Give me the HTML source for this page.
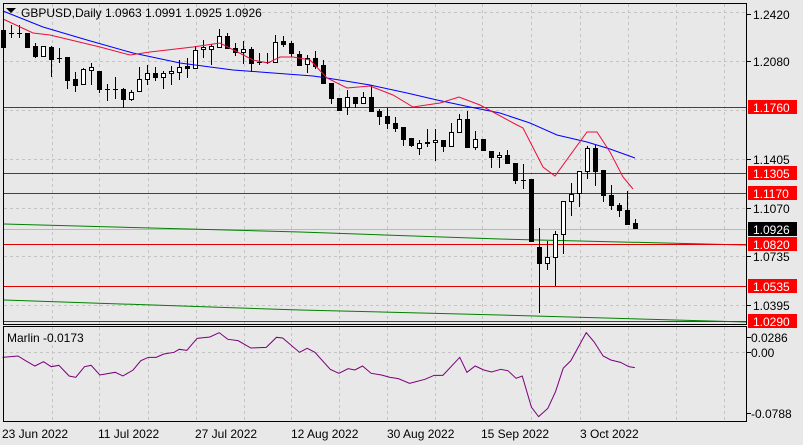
<!DOCTYPE html>
<html><head><meta charset="utf-8"><style>
html,body{margin:0;padding:0;background:#e8e8e8;width:803px;height:445px;overflow:hidden}
svg{display:block}
text{font-family:"Liberation Sans",Arial,sans-serif;font-size:12px;fill:#000}
</style></head><body>
<svg id="s" width="803" height="445" viewBox="0 0 803 445" xmlns="http://www.w3.org/2000/svg">
<rect width="803" height="445" fill="#e8e8e8"/>
<g id="grid" stroke="#c4c4c4" stroke-dasharray="3,3" stroke-width="1"></g>
<g id="hl"></g>
<g id="cd"></g>
<polyline fill="none" stroke="#0000ff" stroke-width="1" points="3,11 43,27 87,40 133,53 180,63 233,70 260,72 313,76 327,78 370,85 407,93 437,100 470,107 500,113 530,123 557,135 587,142 610,149 635,158"/>
<polyline fill="none" stroke="#e8103c" stroke-width="1" points="3,19 33,33 50,35 100,47 130,55 150,52 193,47 220,43 253,60 268,63 280,57 293,57 310,60 327,78 347,88 370,86 393,95 413,107 440,103 459,97 480,105 517,125 523,128 543,167 555,176 587,132 597,132 610,152 623,177 633,189"/>
<polyline fill="none" stroke="#7a007a" stroke-width="1" vector-effect="non-scaling-stroke" transform="translate(0,320) scale(0.512,0.3333)" points="5,112 35,108 50,122 68,138 85,125 100,140 115,136 135,168 148,172 165,140 178,136 195,165 225,157 240,168 260,150 275,122 290,112 305,112 320,102 340,97 350,88 365,91 385,55 410,51 428,38 445,58 465,62 490,84 520,82 540,52 552,54 585,97 600,85 615,97 645,148 662,160 680,146 693,150 708,138 725,160 745,165 762,172 778,176 800,190 830,178 848,166 865,166 898,112 912,157 928,138 945,150 960,156 978,148 992,152 1008,175 1020,168 1038,262 1052,290 1070,265 1085,215 1100,145 1115,122 1130,80 1145,38 1160,65 1178,108 1193,120 1212,127 1228,140 1240,143"/>
<rect x="3.5" y="3.5" width="743" height="321" fill="none" stroke="#000"/>
<rect x="3.5" y="326.5" width="743" height="95" fill="none" stroke="#000"/>
<polygon points="6,8 16,8 11,13" fill="#000"/>
<text x="21" y="17">GBPUSD,Daily  1.0963 1.0991 1.0925 1.0926</text>
<text x="7" y="342">Marlin -0.0173</text>
<g id="ax"></g>
<text x="2" y="438">23 Jun 2022</text>
<text x="98" y="438">11 Jul 2022</text>
<text x="195" y="438">27 Jul 2022</text>
<text x="291" y="438">12 Aug 2022</text>
<text x="387" y="438">30 Aug 2022</text>
<text x="481" y="438">15 Sep 2022</text>
<text x="580" y="438">3 Oct 2022</text>
</svg>
<script>
var NS="http://www.w3.org/2000/svg";
function el(p,t,a,txt){var e=document.createElementNS(NS,t);for(var k in a)e.setAttribute(k,a[k]);if(txt!=null)e.textContent=txt;document.getElementById(p).appendChild(e);return e;}
var gx=[52,99,148,196,244,291,339,387,435,482,531,580,628,676,724];
gx.forEach(function(x){el("grid","line",{x1:x+.5,y1:4,x2:x+.5,y2:324});el("grid","line",{x1:x+.5,y1:327,x2:x+.5,y2:421});});
[12,61,110,159,208,256,305].forEach(function(y){el("grid","line",{x1:4,y1:y+.5,x2:746,y2:y+.5});});
el("grid","line",{x1:4,y1:352.5,x2:746,y2:352.5});
// lines
el("hl","line",{x1:4,y1:229.5,x2:746,y2:229.5,stroke:"#b8b8b8","stroke-dasharray":"none"});
el("hl","polyline",{points:"4,224 300,232 500,239 746,245",fill:"none",stroke:"#008000"});
el("hl","polyline",{points:"4,300 300,310 500,315 746,322",fill:"none",stroke:"#008000"});
[107,173,193,244,286,321].forEach(function(y){el("hl","line",{x1:4,y1:y+.5,x2:746,y2:y+.5,stroke:"#e00000"});});
// candles [top,bottom,wt,wb,bull]
var C=[[30,47,29,47,0],[33,33,25,37,0],[33,33,25,37,0],[33,47,33,47,0],[46,56,43,57,0],[46,56,46,56,1],[47,59,46,76,0],[58,58,48,62,0],[57,80,57,88,0],[79,85,72,91,0],[69,84,68,84,1],[67,70,63,84,1],[71,89,71,92,0],[89,89,84,100,0],[89,89,77,98,0],[89,99,88,107,0],[92,99,90,100,1],[79,91,67,91,1],[73,79,65,84,1],[73,77,67,80,0],[73,77,71,88,1],[71,73,66,84,1],[67,72,60,79,1],[66,68,58,77,0],[50,68,46,68,1],[47,49,40,57,1],[46,49,44,64,1],[36,47,29,47,1],[36,48,33,48,0],[48,52,43,55,0],[49,52,41,63,1],[49,63,47,71,0],[62,62,53,64,0],[62,62,53,63,0],[42,62,35,62,1],[41,44,36,46,0],[43,53,41,56,0],[54,65,51,65,0],[58,64,55,72,1],[58,66,51,68,0],[65,83,60,83,0],[83,98,83,103,0],[98,110,98,110,0],[97,107,90,114,1],[97,103,97,107,0],[97,103,92,103,1],[97,111,85,111,0],[111,116,109,124,0],[116,123,108,128,0],[123,128,117,131,0],[127,139,127,145,0],[138,145,138,146,0],[143,148,140,154,1],[142,143,129,146,0],[140,142,129,160,1],[140,146,140,151,0],[132,146,123,146,1],[119,132,114,132,1],[119,147,111,147,0],[139,147,131,149,1],[139,150,139,150,0],[151,157,151,167,0],[155,157,152,167,1],[155,163,150,163,0],[163,180,163,183,0],[180,180,164,188,0],[179,241,179,241,0],[247,263,228,312,0],[257,263,241,269,1],[234,257,231,285,1],[201,234,201,253,1],[194,201,183,215,1],[171,193,171,206,1],[148,171,146,178,1],[148,171,145,185,0],[170,195,170,201,0],[195,205,185,209,0],[205,210,203,216,0],[210,224,191,224,0],[223,228,219,228,0]];
C.forEach(function(c,i){var x=3+8*i;
el("cd","rect",{x:x,y:c[2],width:1,height:c[3]-c[2]+1,fill:"#000"});
if(c[1]-c[0]<1){el("cd","rect",{x:x-2,y:c[0],width:5,height:1,fill:"#000"});}
else if(c[4]){el("cd","rect",{x:x-1.5,y:c[0]+.5,width:4,height:c[1]-c[0],fill:"#fff",stroke:"#000"});}
else{el("cd","rect",{x:x-2,y:c[0],width:5,height:c[1]-c[0]+1,fill:"#000"});}
});
// axis
function tick(y){el("ax","line",{x1:747,y1:y+.5,x2:751,y2:y+.5,stroke:"#000"});}
[[14,"1.2420"],[61,"1.2080"],[159,"1.1405"],[208,"1.1070"],[256,"1.0735"],[305,"1.0395"]].forEach(function(a){tick(a[0]);el("ax","text",{x:753,y:a[0]+5},a[1]);});
[[107,"1.1760"],[173,"1.1305"],[193,"1.1170"],[244,"1.0820"],[286,"1.0535"],[321,"1.0290"]].forEach(function(a){el("ax","rect",{x:748,y:a[0]-7,width:49,height:14,fill:"#ff0000"});el("ax","text",{x:753,y:a[0]+5,style:"fill:#fff"},a[1]);});
el("ax","rect",{x:748,y:222,width:49,height:14,fill:"#000"});el("ax","text",{x:753,y:234,style:"fill:#fff"},"1.0926");
[[337,"0.0286"],[352,"0.00"],[413,"-0.0788"]].forEach(function(a){tick(a[0]);el("ax","text",{x:751,y:a[0]+5},a[1]);});
</script>
</body></html>
